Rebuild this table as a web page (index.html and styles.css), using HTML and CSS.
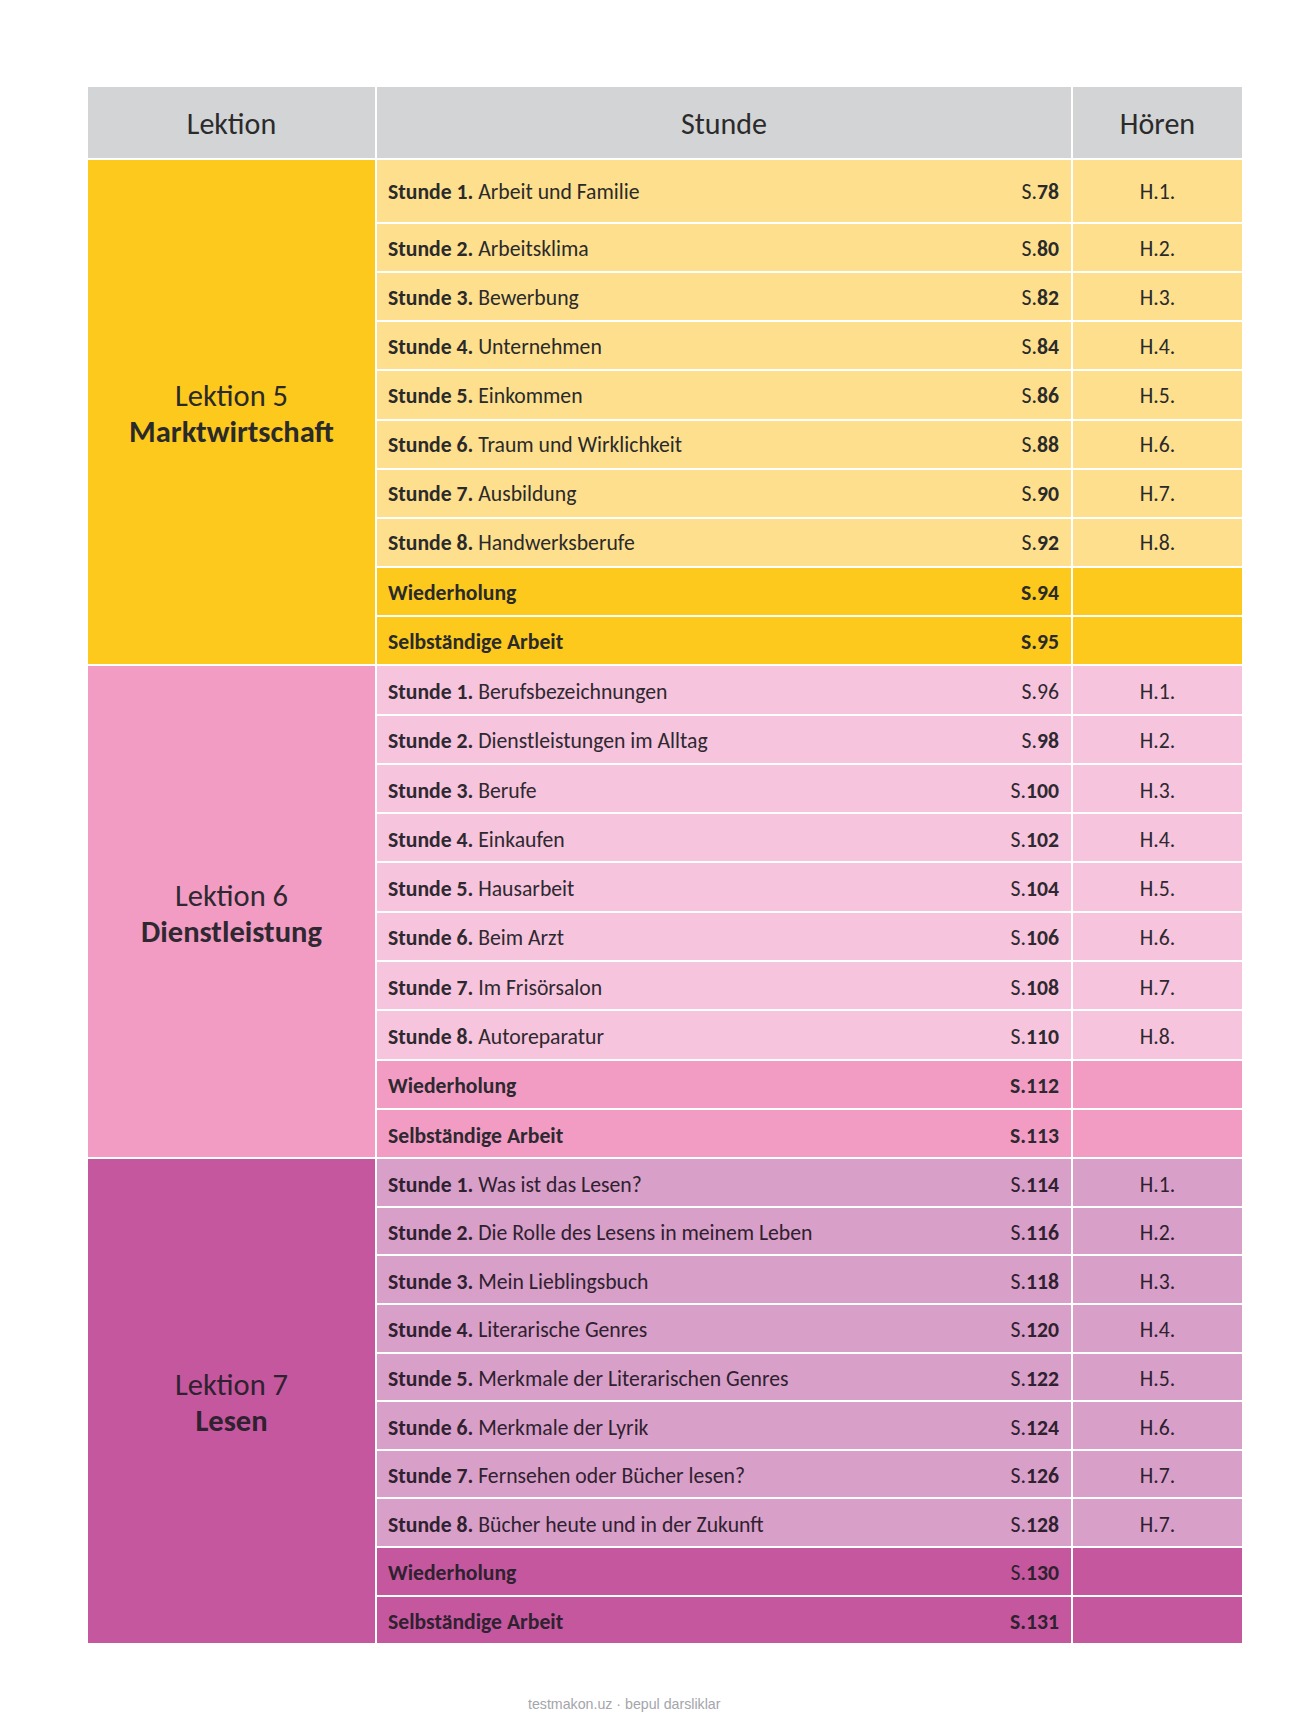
FILE: index.html
```html
<!DOCTYPE html>
<html lang="de">
<head>
<meta charset="utf-8">
<title>Inhalt</title>
<link rel="stylesheet" href="styles.css">
</head>
<body>
<div class="page">
  <div class="table">
    <div class="head">
      <div class="hcell">Lektion</div>
      <div class="hcell">Stunde</div>
      <div class="hcell">Hören</div>
    </div>

    <div class="section s5">
      <div class="lektion"><span class="lk">Lektion 5</span><span class="lt">Marktwirtschaft</span></div>
      <div class="rows">
        <div class="row first"><div class="st"><span><b>Stunde 1.</b> Arbeit und Familie</span><span>S.<b>78</b></span></div><div class="hr">H.1.</div></div>
        <div class="row"><div class="st"><span><b>Stunde 2.</b> Arbeitsklima</span><span>S.<b>80</b></span></div><div class="hr">H.2.</div></div>
        <div class="row"><div class="st"><span><b>Stunde 3.</b> Bewerbung</span><span>S.<b>82</b></span></div><div class="hr">H.3.</div></div>
        <div class="row"><div class="st"><span><b>Stunde 4.</b> Unternehmen</span><span>S.<b>84</b></span></div><div class="hr">H.4.</div></div>
        <div class="row"><div class="st"><span><b>Stunde 5.</b> Einkommen</span><span>S.<b>86</b></span></div><div class="hr">H.5.</div></div>
        <div class="row"><div class="st"><span><b>Stunde 6.</b> Traum und Wirklichkeit</span><span>S.<b>88</b></span></div><div class="hr">H.6.</div></div>
        <div class="row"><div class="st"><span><b>Stunde 7.</b> Ausbildung</span><span>S.<b>90</b></span></div><div class="hr">H.7.</div></div>
        <div class="row"><div class="st"><span><b>Stunde 8.</b> Handwerksberufe</span><span>S.<b>92</b></span></div><div class="hr">H.8.</div></div>
        <div class="row dark"><div class="st"><b>Wiederholung</b><b>S.94</b></div><div class="hr"></div></div>
        <div class="row dark"><div class="st"><b>Selbständige Arbeit</b><b>S.95</b></div><div class="hr"></div></div>
      </div>
    </div>

    <div class="section s6">
      <div class="lektion"><span class="lk">Lektion 6</span><span class="lt">Dienstleistung</span></div>
      <div class="rows">
        <div class="row"><div class="st"><span><b>Stunde 1.</b> Berufsbezeichnungen</span><span>S.96</span></div><div class="hr">H.1.</div></div>
        <div class="row"><div class="st"><span><b>Stunde 2.</b> Dienstleistungen im Alltag</span><span>S.<b>98</b></span></div><div class="hr">H.2.</div></div>
        <div class="row"><div class="st"><span><b>Stunde 3.</b> Berufe</span><span>S.<b>100</b></span></div><div class="hr">H.3.</div></div>
        <div class="row"><div class="st"><span><b>Stunde 4.</b> Einkaufen</span><span>S.<b>102</b></span></div><div class="hr">H.4.</div></div>
        <div class="row"><div class="st"><span><b>Stunde 5.</b> Hausarbeit</span><span>S.<b>104</b></span></div><div class="hr">H.5.</div></div>
        <div class="row"><div class="st"><span><b>Stunde 6.</b> Beim Arzt</span><span>S.<b>106</b></span></div><div class="hr">H.6.</div></div>
        <div class="row"><div class="st"><span><b>Stunde 7.</b> Im Frisörsalon</span><span>S.<b>108</b></span></div><div class="hr">H.7.</div></div>
        <div class="row"><div class="st"><span><b>Stunde 8.</b> Autoreparatur</span><span>S.<b>110</b></span></div><div class="hr">H.8.</div></div>
        <div class="row dark"><div class="st"><b>Wiederholung</b><b>S.112</b></div><div class="hr"></div></div>
        <div class="row dark"><div class="st"><b>Selbständige Arbeit</b><b>S.113</b></div><div class="hr"></div></div>
      </div>
    </div>

    <div class="section s7">
      <div class="lektion"><span class="lk">Lektion 7</span><span class="lt">Lesen</span></div>
      <div class="rows">
        <div class="row"><div class="st"><span><b>Stunde 1.</b> Was ist das Lesen?</span><span>S.<b>114</b></span></div><div class="hr">H.1.</div></div>
        <div class="row"><div class="st"><span><b>Stunde 2.</b> Die Rolle des Lesens in meinem Leben</span><span>S.<b>116</b></span></div><div class="hr">H.2.</div></div>
        <div class="row"><div class="st"><span><b>Stunde 3.</b> Mein Lieblingsbuch</span><span>S.<b>118</b></span></div><div class="hr">H.3.</div></div>
        <div class="row"><div class="st"><span><b>Stunde 4.</b> Literarische Genres</span><span>S.<b>120</b></span></div><div class="hr">H.4.</div></div>
        <div class="row"><div class="st"><span><b>Stunde 5.</b> Merkmale der Literarischen Genres</span><span>S.<b>122</b></span></div><div class="hr">H.5.</div></div>
        <div class="row"><div class="st"><span><b>Stunde 6.</b> Merkmale der Lyrik</span><span>S.<b>124</b></span></div><div class="hr">H.6.</div></div>
        <div class="row"><div class="st"><span><b>Stunde 7.</b> Fernsehen oder Bücher lesen?</span><span>S.<b>126</b></span></div><div class="hr">H.7.</div></div>
        <div class="row"><div class="st"><span><b>Stunde 8.</b> Bücher heute und in der Zukunft</span><span>S.<b>128</b></span></div><div class="hr">H.7.</div></div>
        <div class="row dark"><div class="st"><b>Wiederholung</b><span>S.<b>130</b></span></div><div class="hr"></div></div>
        <div class="row dark"><div class="st"><b>Selbständige Arbeit</b><b>S.131</b></div><div class="hr"></div></div>
      </div>
    </div>
  </div>
  <div class="footer">testmakon.uz · bepul darsliklar</div>
</div>
</body>
</html>
```

FILE: styles.css
```css
html, body {
  margin: 0;
  padding: 0;
  background: #ffffff;
}

.page {
  padding: 87px 0 0 88px;
  width: 1154px;
  font-family: "Carlito", "Lato", "Open Sans", sans-serif;
  color: #2a2a2a;
}

.table {
  display: flex;
  flex-direction: column;
  gap: 2px;
  width: 1154px;
}

.head {
  display: grid;
  grid-template-columns: 287px 694px 169px;
  gap: 2px;
  height: 71px;
}

.hcell {
  background: #d3d4d6;
  display: flex;
  align-items: center;
  justify-content: center;
  font-size: 30px;
  padding-top: 2px;
  color: #2b2b2b;
}

.section {
  display: grid;
  grid-template-columns: 287px 865px;
  gap: 2px;
}

.lektion {
  display: flex;
  flex-direction: column;
  align-items: center;
  justify-content: center;
  font-size: 30.5px;
  line-height: 36px;
  padding-top: 4px;
}

.lt {
  font-weight: 700;
}

.rows {
  display: flex;
  flex-direction: column;
  gap: 2px;
}

.row {
  display: grid;
  grid-template-columns: 694px 169px;
  gap: 2px;
  font-size: 21.7px;
}

.st {
  display: flex;
  align-items: center;
  justify-content: space-between;
  padding: 1px 12px 0 11px;
}

.hr {
  display: flex;
  align-items: center;
  justify-content: center;
  padding-top: 1px;
}

.s6 .st, .s6 .hr, .s7 .st, .s7 .hr {
  padding-top: 3px;
}

b {
  font-weight: 700;
}

/* Lektion 5 */
.s5 .lektion { background: #fcc91c; }
.s5 .row { height: 47.15px; }
.s5 .row.first { height: 62px; }
.s5 .row .st, .s5 .row .hr { background: #fddf8e; }
.s5 .row.dark .st, .s5 .row.dark .hr { background: #fcc91c; }

/* Lektion 6 */
.s6 { color: #2e2830; }
.s6 .lektion { background: #f29cc3; }
.s6 .row { height: 47.3px; }
.s6 .row .st, .s6 .row .hr { background: #f6c4dc; }
.s6 .row.dark .st, .s6 .row.dark .hr { background: #f29cc3; }

/* Lektion 7 */
.s7 { color: #2f2130; }
.s7 .lektion { background: #c5579e; }
.s7 .row { height: 46.6px; }
.s7 .row .st, .s7 .row .hr { background: #d89fc8; }
.s7 .row.dark .st, .s7 .row.dark .hr { background: #c5579e; }

.footer {
  margin-top: 53px;
  padding-left: 440px;
  font-family: "Liberation Sans", Arial, sans-serif;
  font-size: 14.2px;
  line-height: 17px;
  color: #a3a6aa;
}
```
